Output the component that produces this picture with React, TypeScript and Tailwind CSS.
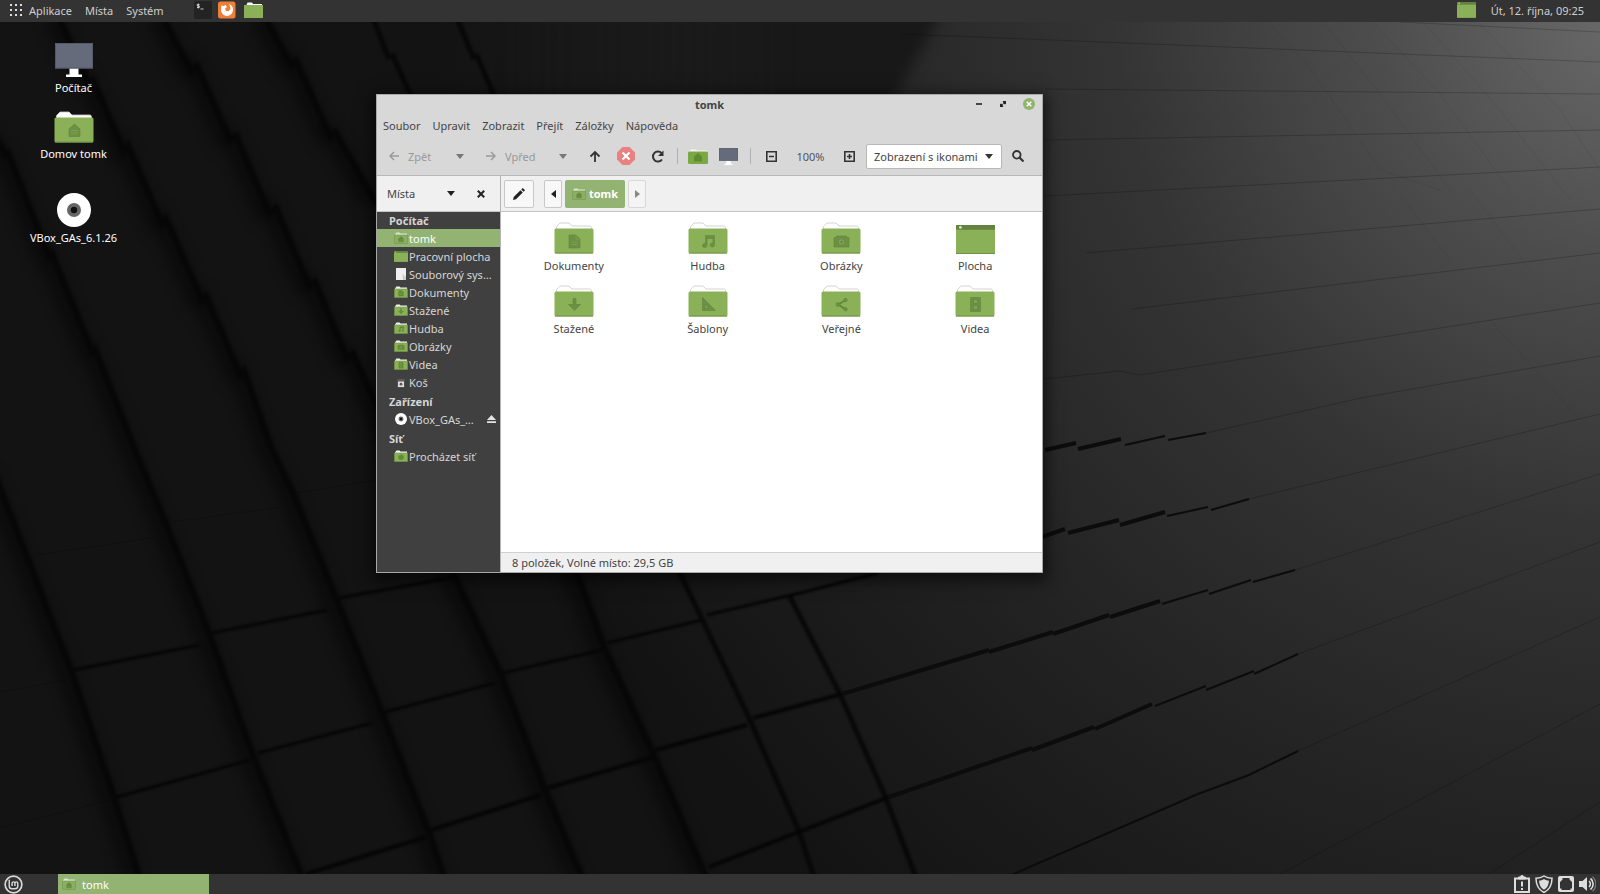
import React from "react";

type Glyph =
  | "home"
  | "document"
  | "download"
  | "music"
  | "photo"
  | "template"
  | "share"
  | "video"
  | "network";

type Place = {
  label: string;
  icon: Glyph | "desktop" | "drive" | "trash" | "disc";
  selected?: boolean;
  ejectable?: boolean;
};

const menus = ["Soubor", "Upravit", "Zobrazit", "Přejít", "Záložky", "Nápověda"];

const places: { title: string; items: Place[] }[] = [
  {
    title: "Počítač",
    items: [
      { label: "tomk", icon: "home", selected: true },
      { label: "Pracovní plocha", icon: "desktop" },
      { label: "Souborový sys…", icon: "drive" },
      { label: "Dokumenty", icon: "document" },
      { label: "Stažené", icon: "download" },
      { label: "Hudba", icon: "music" },
      { label: "Obrázky", icon: "photo" },
      { label: "Videa", icon: "video" },
      { label: "Koš", icon: "trash" },
    ],
  },
  {
    title: "Zařízení",
    items: [{ label: "VBox_GAs_…", icon: "disc", ejectable: true }],
  },
  { title: "Síť", items: [{ label: "Procházet síť", icon: "network" }] },
];

const files: { label: string; icon: Glyph | "desktop" }[] = [
  { label: "Dokumenty", icon: "document" },
  { label: "Hudba", icon: "music" },
  { label: "Obrázky", icon: "photo" },
  { label: "Plocha", icon: "desktop" },
  { label: "Stažené", icon: "download" },
  { label: "Šablony", icon: "template" },
  { label: "Veřejné", icon: "share" },
  { label: "Videa", icon: "video" },
];

// Emblems are drawn in a 16x16 box
const glyphs: Record<Glyph, React.ReactNode> = {
  home: (
    <>
      <path d="M8 1.500 2.500 6.500V14h11V6.500z" />
      <path d="M4.500 8h7M4.500 10.500h7" stroke="#7fa552" strokeWidth=".8" />
    </>
  ),
  document: (
    <>
      <path d="M2.500 1.500h7l4 4v9h-11z" />
      <path d="M9.500 2v3.500H13M5 8.500h6M5 11h6" stroke="#7fa552" strokeWidth=".8" fill="none" />
    </>
  ),
  download: <path d="M6.500 2h3v6H14l-6 6-6-6h4.500z" />,
  music: (
    <path d="M5 2h9v9.500a2.200 2 0 1 1-1.500-1.900V5h-6v7a2.200 2 0 1 1-1.500-1.900z" />
  ),
  photo: (
    <>
      <path d="M.5 4H3V2.500h10V4h2.500v9.500H.5z" />
      <circle cx="8" cy="8.500" r="3.200" fill="#7fa552" />
      <circle cx="8" cy="8.500" r="1" />
    </>
  ),
  template: <path fillRule="evenodd" d="M2 1v13h13zM4.500 8v3.500H8z" />,
  share: (
    <>
      <path d="M12 3.500 5 8l7 5" fill="none" strokeWidth="1.800" />
      <circle cx="12" cy="3.500" r="1.800" />
      <circle cx="4.500" cy="8" r="2" />
      <circle cx="12" cy="12.700" r="1.800" />
    </>
  ),
  video: (
    <>
      <path d="M3 1h10v14H3z" />
      <path d="M6 3h4v4H6zM6 9h4v4H6z" fill="#7fa552" />
    </>
  ),
  network: (
    <>
      <circle cx="8" cy="8" r="6" />
      <path d="M2 8h12M8 2v12" />
    </>
  ),
};

function FolderIcon({ glyph, className }: { glyph?: Glyph; className: string }) {
  return (
    <svg viewBox="0 0 40 32" className={className} aria-hidden="true">
      <path d="M2.500 9V4.500L6 1h9l3 3h18.500l1 1.500V9z" fill="#fff" stroke="#c9c9c9" strokeWidth=".8" />
      <rect x=".5" y="6.500" width="39" height="25" rx="1.500" fill="#8bb158" />
      <path d="M1 31h38" stroke="#6f9145" />
      {glyph && (
        <g transform="translate(12.500 11.500)" fill="#6d9144" stroke="#628539" strokeWidth=".6">
          {glyphs[glyph]}
        </g>
      )}
    </svg>
  );
}

function SmallFolder({ glyph, selected }: { glyph?: Glyph; selected?: boolean }) {
  return (
    <svg viewBox="0 0 14 12" className="h-3 w-3.5 shrink-0" aria-hidden="true">
      <path d="M1 2.500 2.500.5h3l1 1H13V4H1z" fill={selected ? "#dbe6d0" : "#f4f4f4"} />
      <path d="M.5 3h13v8.500H.5z" fill={selected ? "#8aae66" : "#8bb158"} stroke="#729a43" strokeWidth=".6" />
      {glyph && (
        <g transform="translate(3.600 3.800) scale(.43)" fill="#648a3a" stroke="#648a3a">
          {glyphs[glyph]}
        </g>
      )}
    </svg>
  );
}

function DesktopIcon({ className }: { className: string }) {
  return (
    <svg viewBox="0 0 40 30" preserveAspectRatio="none" className={className} aria-hidden="true">
      <path d="M0 0h40v30H0z" fill="#8bb158" />
      <path d="M0 0h40v5H0z" fill="#64833f" />
      <circle cx="4.500" cy="2.500" r="1.400" fill="#d8e4ca" />
      <path d="M0 29.500h40" stroke="#6f9145" />
    </svg>
  );
}

function ComputerIcon({ className }: { className: string }) {
  return (
    <svg viewBox="0 0 38 34" className={className} aria-hidden="true">
      <path d="M14.500 25h9v6.500H27V34H11v-2.500h3.500z" fill="#fff" />
      <path d="M0 0h38v25.500H0z" fill="#666b7b" />
      <path d="M.5.5h37v24.500H.5z" fill="none" stroke="#555968" />
    </svg>
  );
}

function DiscIcon({ className }: { className: string }) {
  return (
    <svg viewBox="0 0 34 34" className={className} aria-hidden="true">
      <circle cx="17" cy="17" r="17" fill="#fff" />
      <circle cx="17" cy="17" r="7" fill="#666" />
      <circle cx="17" cy="17" r="3.200" fill="#111" />
    </svg>
  );
}

function PlaceIcon({ icon, selected }: { icon: Place["icon"]; selected?: boolean }) {
  if (icon === "desktop") return <DesktopIcon className="h-[11px] w-3.5 shrink-0" />;
  if (icon === "disc") return <DiscIcon className="h-3 w-3.5 shrink-0" />;
  if (icon === "drive") {
    return (
      <svg viewBox="0 0 14 12" className="h-3 w-3.5 shrink-0" aria-hidden="true">
        <path d="M2 0h10v12H2z" fill="#eee" />
        <path d="M8.500 6 12 9v3H9z" fill="#ccc" />
      </svg>
    );
  }
  if (icon === "trash") {
    return (
      <svg viewBox="0 0 14 12" className="h-3 w-3.5 shrink-0" aria-hidden="true">
        <path d="M3.500 3h7v8.500h-7z" fill="#5c5c5c" />
        <path d="M4 5.500h6V11H4z" fill="#ddd" />
        <circle cx="7" cy="8.200" r="1.400" fill="#555" />
      </svg>
    );
  }
  return <SmallFolder glyph={icon} selected={selected} />;
}

function Caret({ className }: { className: string }) {
  return (
    <svg viewBox="0 0 8 5" className={`h-[5px] w-2 ${className}`} aria-hidden="true">
      <path d="M0 0h8L4 5z" fill="currentColor" />
    </svg>
  );
}

// Steep gaps between the blocks, from left to right
const gaps = [
  "M-4 470 74 670 117 797 143 880",
  "M-4 132 8 155 11 153 52 257 55 254 95 352 98 349 138 450 168 522 212 633 255 753 306 880",
  "M62 18 92 84 96 81 127 151 131 146 165 224 169 219 205 300 209 296 243 375 247 371 275 450 296 493 339 598 385 713 431 830 448 880",
  "M166 18 194 71 200 66 233 140 239 136 272 213 279 208 312 286 318 282 350 358 356 354 457 575 503 673 548 790 586 880",
  "M268 18 294 65 299 61 333 136 338 132 380 205M577 565 607 647 656 753 710 880",
  "M376 18 391 57 396 56 414 96M679 565 704 617 753 720 801 829 818 880",
  "M460 18 476 57 480 56 498 98M793 597 842 692 888 796 920 880",
];

const seams = [
  "M74 670 199 645M212 633 327 610M339 598 454 577",
  "M117 797 250 760M258 753 372 723M385 712 495 683M503 673 602 650M607 643 702 620M707 615 800 593 878 573",
  "M306 874 426 837M431 830 541 795M548 788 653 757M656 750 747 725M753 718 842 694",
  "M709 867 801 831M801 831 889 797",
];

const steps = [
  "M842 694 989 650M989 652 1053 632M1053 634 1109 615M1110 617 1160 601",
  "M889 797 1032 748M1032 750 1094 727M1095 729 1152 704",
  "M1045 450 1076 443M1078 449 1121 439",
  "M1042 537 1065 529M1068 533 1119 520M1120 525 1165 512",
];

const thinSteps = [
  "M1125 445 1165 436M1168 440 1206 433",
  "M1167 516 1208 507M1211 510 1249 499",
  "M1162 604 1208 590M1209 594 1251 580M1253 582 1295 570",
  "M1155 706 1206 686M1206 690 1254 671M1254 674 1298 654",
  "M1009 876 1198 794 1249 775 1298 751",
];

const hairlines = [
  "M902 34 1600 62M1400 22 1600 32M1045 89 1600 94M1045 140 1600 130M1045 196 1600 167",
  "M1086 253 1600 209M1132 309 1600 253M1045 379 1120 371 1140 375 1600 303M1206 433 1361 398 1600 356",
  "M1249 499 1600 414M1295 570 1600 474M1298 654 1600 542M1298 751 1600 617",
  "M1280 874 1600 704M1489 874 1600 802",
  "M38 555 156 537M171 522 283 507M296 493 375 480M0 692 66 680M0 828 110 800",
];

const cracks = [
  "M1270 24 1310 68 1380 170 1440 190M1325 24 1380 94 1450 190M1375 24 1440 94 1510 190",
  "M1425 24 1500 110 1570 200M1480 24 1560 110 1600 170M1400 195 1450 260M1470 190 1530 270M1490 320 1580 420",
];

function Wallpaper() {
  return (
    <svg
      viewBox="0 0 1600 894"
      preserveAspectRatio="none"
      className="absolute inset-0 h-full w-full"
      aria-hidden="true"
    >
      <defs>
        <radialGradient id="light" gradientUnits="userSpaceOnUse" cx="1640" cy="0" r="1200">
          <stop offset="0" stopColor="#6c6c6c" />
          <stop offset=".22" stopColor="#4d4d4d" />
          <stop offset=".44" stopColor="#343434" />
          <stop offset=".68" stopColor="#242424" />
          <stop offset=".86" stopColor="#1a1a1a" />
          <stop offset="1" stopColor="#131313" />
        </radialGradient>
        <linearGradient id="shade" gradientUnits="userSpaceOnUse" x1="500" y1="0" x2="800" y2="0">
          <stop offset="0" stopColor="#171717" stopOpacity="0" />
          <stop offset="1" stopColor="#181818" />
        </linearGradient>
        <filter id="soft" x="-10%" y="-10%" width="120%" height="120%" colorInterpolationFilters="sRGB">
          <feGaussianBlur stdDeviation="7" />
        </filter>
        <filter id="edge" x="-5%" y="-5%" width="110%" height="110%" colorInterpolationFilters="sRGB">
          <feGaussianBlur stdDeviation="1" />
        </filter>
      </defs>
      <path d="M0 0h1600v894H0z" fill="url(#light)" />
      <path d="M480-40H970L850 180H480z" fill="url(#shade)" filter="url(#soft)" />
      <g fill="none" stroke="#000" strokeOpacity=".5" strokeWidth="14" filter="url(#soft)">
        {gaps.slice(0, 5).map((d) => (
          <path key={d} d={d} transform="translate(-10 0)" />
        ))}
      </g>
      <g fill="none" stroke="#060606" filter="url(#edge)">
        {gaps.map((d, i) => (
          <path key={d} d={d} strokeWidth={i > 4 ? 5 : 6} strokeOpacity=".85" transform="translate(-3 0)" />
        ))}
        {seams.map((d, i) => (
          <path key={d} d={d} strokeWidth={i > 1 ? 4 : 3} />
        ))}
      </g>
      <g fill="none" stroke="#0c0c0c">
        {steps.map((d) => (
          <path key={d} d={d} strokeWidth="4" />
        ))}
        {thinSteps.map((d) => (
          <path key={d} d={d} strokeWidth="2" />
        ))}
      </g>
      <g fill="none" stroke="#000">
        {hairlines.map((d) => (
          <path key={d} d={d} strokeOpacity=".2" />
        ))}
        {cracks.map((d) => (
          <path key={d} d={d} strokeOpacity=".06" />
        ))}
      </g>
    </svg>
  );
}

function TopPanel() {
  return (
    <header className="relative flex h-[22px] items-center bg-[#333] pr-4 pb-0.5 pl-2.5 text-[#cfcfcf]">
      <svg viewBox="0 0 12 12" className="mr-[7px] h-3 w-3" fill="#ddd" aria-hidden="true">
        {[0, 5, 10].map((y) => [0, 5, 10].map((x) => <rect key={`${x}-${y}`} x={x} y={y} width="2" height="2" />))}
      </svg>
      <nav className="flex gap-[13px]">
        <button type="button">Aplikace</button>
        <button type="button">Místa</button>
        <button type="button">Systém</button>
      </nav>
      <div className="ml-[30px] flex items-center gap-1.5">
        <button type="button" aria-label="Terminál">
          <svg viewBox="0 0 18 18" className="h-[18px] w-[18px]">
            <rect width="18" height="18" rx="2" fill="#232323" />
            <path d="M5.500 3.500H3.300v1.500h2v1.500H3M4.300 2.500v5M6.500 8h3" fill="none" stroke="#ddd" strokeWidth=".9" />
          </svg>
        </button>
        <button type="button" aria-label="Firefox">
          <svg viewBox="0 0 18 18" className="h-[18px] w-[18px]">
            <rect y=".5" width="17.500" height="17" rx="2.500" fill="#ee7f37" />
            <path d="M3.500 4 5 5.200 7.500 4 9 6 7 7.500 8 10l2.500.3L12.500 8 12 5l-1-2a6 6 0 0 1 4 6 6 6 0 0 1-12 0z" fill="#fff" />
          </svg>
        </button>
        <button type="button" aria-label="Správce souborů" className="ml-0.5">
          <svg viewBox="0 0 19 16" className="h-4 w-[19px]">
            <path d="M2 4 3.500.5H8l1 1.500h9v2z" fill="#fff" />
            <path d="M0 3h19v13H0z" fill="#8bb158" />
          </svg>
        </button>
      </div>
      <div className="ml-auto flex items-center gap-[15px]">
        <DesktopIcon className="h-4 w-[19px]" />
        <time>Út, 12. října, 09:25</time>
      </div>
    </header>
  );
}

function DesktopItem({ label, children }: { label: string; children: React.ReactNode }) {
  return (
    <button type="button" className="flex w-full flex-col items-center text-white">
      {children}
      <span className="mt-[3px]">{label}</span>
    </button>
  );
}

function Separator() {
  return <span className="h-4 w-px bg-[#b0b0b0]" />;
}

function Toolbar() {
  return (
    <div className="flex h-[39px] items-center border-b border-[#b8b8b8] pl-3">
      <button type="button" className="flex items-center text-[#999]">
        <svg viewBox="0 0 10 10" className="mr-[9px] h-2.5 w-2.5" fill="none" stroke="currentColor" strokeWidth="1.500">
          <path d="M10 5H1M5 1 1 5l4 4" />
        </svg>
        <span className="w-12 text-left">Zpět</span>
        <Caret className="text-[#777]" />
      </button>
      <button type="button" className="ml-[22px] flex items-center text-[#999]">
        <svg viewBox="0 0 10 10" className="mr-[9px] h-2.5 w-2.5" fill="none" stroke="currentColor" strokeWidth="1.500">
          <path d="M0 5h9M5 1l4 4-4 4" />
        </svg>
        <span className="w-[54px] text-left">Vpřed</span>
        <Caret className="text-[#777]" />
      </button>
      <div className="ml-[22px] flex items-center gap-4">
        <button type="button" aria-label="Nahoru">
          <svg viewBox="0 0 12 12" className="h-3 w-3" fill="none" stroke="#333" strokeWidth="1.800">
            <path d="M6 12V2M1.500 6.500 6 2l4.500 4.500" />
          </svg>
        </button>
        <button type="button" aria-label="Zastavit">
          <svg viewBox="0 0 18 18" className="h-[18px] w-[18px]">
            <path d="M5.500 0h7L18 5.500v7L12.500 18h-7L0 12.500v-7z" fill="#e8817f" />
            <path d="m5.500 5.500 7 7m0-7-7 7" stroke="#fff" strokeWidth="2.200" />
          </svg>
        </button>
        <button type="button" aria-label="Obnovit">
          <svg viewBox="0 0 13 13" className="h-[13px] w-[13px]" fill="none" stroke="#333" strokeWidth="2">
            <path d="M11 9.500A5 5 0 1 1 10.500 3" />
            <path d="M12.500.5v5.500H7z" fill="#333" stroke="none" />
          </svg>
        </button>
      </div>
      <div className="ml-[13px] flex items-center">
        <Separator />
        <button type="button" aria-label="Domů" className="mr-[11px] ml-2.5">
          <svg viewBox="0 0 20 15" className="h-[15px] w-5">
            <path d="M1 3 3 .5h5l1 1h10V5H1z" fill="#f6f6f6" />
            <rect y="2.500" width="20" height="12.500" rx="1.500" fill="#7aa845" />
            <path d="m10 4-4 3.500v5h8v-5z" fill="#5f8c33" />
          </svg>
        </button>
        <button type="button" aria-label="Počítač">
          <ComputerIcon className="h-[17px] w-[19px]" />
        </button>
        <span className="w-3" />
        <Separator />
      </div>
      <button type="button" aria-label="Zmenšit" className="ml-[15px]">
        <svg viewBox="0 0 11 11" className="h-[11px] w-[11px]" fill="none" stroke="#333" strokeWidth="1.600">
          <path d="M.8.800h9.400v9.400H.8zM3 5.500h5" />
        </svg>
      </button>
      <span className="w-[67px] text-center text-[#555]">100%</span>
      <button type="button" aria-label="Zvětšit">
        <svg viewBox="0 0 11 11" className="h-[11px] w-[11px]" fill="none" stroke="#333" strokeWidth="1.600">
          <path d="M.8.800h9.400v9.400H.8zM3 5.500h5M5.500 3v5" />
        </svg>
      </button>
      <div className="relative ml-[11px] w-[136px]">
        <select
          aria-label="Způsob zobrazení"
          className="block h-[25px] w-full appearance-none rounded-xs border border-[#b8b8b8] bg-white pl-[7px] text-[#444]"
        >
          <option>Zobrazení s ikonami</option>
          <option>Zobrazení v seznamu</option>
        </select>
        <Caret className="pointer-events-none absolute top-2.5 right-[9px] text-[#333]" />
      </div>
      <button type="button" aria-label="Hledat" className="ml-2.5">
        <svg viewBox="0 0 12 12" className="h-3 w-3" fill="none" stroke="#333" strokeWidth="1.800">
          <circle cx="4.800" cy="4.800" r="3.800" />
          <path d="m7.500 7.500 4 4" strokeWidth="2.200" />
        </svg>
      </button>
    </div>
  );
}

function Sidebar() {
  return (
    <aside className="flex w-[124px] shrink-0 flex-col border-r border-[#b4b4b4]">
      <div className="flex h-9 items-center border-b border-[#c4c4c4] bg-[#f0f0f0] pr-[15px] pl-2.5">
        <button type="button" className="flex flex-1 items-center justify-between text-[#444]">
          Místa
          <Caret className="text-[#222]" />
        </button>
        <button type="button" aria-label="Zavřít postranní panel" className="ml-[22px]">
          <svg viewBox="0 0 8 8" className="h-2 w-2" stroke="#222" strokeWidth="2">
            <path d="m.8.800 6.400 6.400M7.200.800.8 7.200" />
          </svg>
        </button>
      </div>
      <div className="flex flex-1 flex-col gap-0.5 bg-[#404040] text-[#d6d6d6]">
        {places.map((group) => (
          <section key={group.title}>
            <h2 className="h-[17px] pl-3 leading-[17px] font-bold">{group.title}</h2>
            <ul>
              {group.items.map((item) => (
                <li key={item.label}>
                  <button
                    type="button"
                    className={`flex h-[18px] w-full items-center gap-px pr-1 pl-[17px] text-left whitespace-nowrap ${
                      item.selected ? "bg-[#92b372] text-white" : ""
                    }`}
                  >
                    <PlaceIcon icon={item.icon} selected={item.selected} />
                    <span>{item.label}</span>
                    {item.ejectable && (
                      <svg viewBox="0 0 9 8" className="ml-auto h-2 w-[9px] shrink-0" fill="#e4e4e4">
                        <path d="M4.500 0 9 5H0zM0 6.200h9V8H0z" />
                      </svg>
                    )}
                  </button>
                </li>
              ))}
            </ul>
          </section>
        ))}
      </div>
    </aside>
  );
}

function PathBar() {
  return (
    <div className="flex h-9 items-center border-b border-[#c4c4c4] bg-[#f0f0f0] pl-[3px]">
      <button
        type="button"
        aria-label="Upravit cestu"
        className="mr-2.5 flex h-7 w-[30px] items-center justify-center rounded-xs border border-[#c8c8c8] bg-[#f8f8f8]"
      >
        <svg viewBox="0 0 12 12" className="h-3 w-3" fill="#222">
          <path d="M0 12 .7 9 7.500 2.200l2.300 2.300L3 11.300zM8.300 1.400 9.700 0 12 2.300l-1.400 1.400z" />
        </svg>
      </button>
      <div className="flex gap-[3px]">
        <button
          type="button"
          aria-label="Předchozí"
          className="flex h-7 w-[18px] items-center justify-center rounded-xs border border-[#c8c8c8] bg-[#f8f8f8]"
        >
          <svg viewBox="0 0 5 8" className="h-2 w-[5px]" fill="#222">
            <path d="M5 0v8L0 4z" />
          </svg>
        </button>
        <button
          type="button"
          className="flex h-7 w-[60px] items-center justify-center gap-[3px] rounded-xs bg-[#92b372] font-bold text-white"
        >
          <SmallFolder glyph="home" selected />
          tomk
        </button>
        <button
          type="button"
          aria-label="Následující"
          className="flex h-7 w-[18px] items-center justify-center rounded-xs border border-[#d8d8d8] bg-[#f4f4f4]"
        >
          <svg viewBox="0 0 5 8" className="h-2 w-[5px]" fill="#888">
            <path d="M0 0v8l5-4z" />
          </svg>
        </button>
      </div>
    </div>
  );
}

function FileManager() {
  return (
    <section className="absolute top-[72px] left-[376px] flex h-[479px] w-[667px] flex-col border border-[#a8a8a8] bg-[#d8d8d8] text-[#444] shadow-[0_4px_14px_4px_rgba(0,0,0,0.55)]">
      <div className="grid h-5 grid-cols-[1fr_auto_1fr] items-center pb-0.5">
        <h1 className="col-start-2 font-bold">tomk</h1>
        <div className="flex items-center justify-end gap-[17px] pr-[7px]">
          <button type="button" aria-label="Minimalizovat">
            <svg viewBox="0 0 8 8" className="h-2 w-2">
              <path d="M1 4h6" stroke="#222" strokeWidth="1.600" />
            </svg>
          </button>
          <button type="button" aria-label="Maximalizovat">
            <svg viewBox="0 0 6 6" className="h-1.5 w-1.5" fill="#222">
              <path d="M2.500 0H6v3.500L5 2.700 4.200 3.500 2.700 2l.8-.8zM3.500 6H0V2.500l1 .8.8-.8L3.300 4l-.8.8z" />
            </svg>
          </button>
          <button type="button" aria-label="Zavřít">
            <svg viewBox="0 0 12 12" className="h-3 w-3">
              <circle cx="6" cy="6" r="6" fill="#8fb56a" />
              <path d="m3.700 3.700 4.600 4.600m0-4.600L3.700 8.300" stroke="#fff" strokeWidth="1.500" />
            </svg>
          </button>
        </div>
      </div>
      <nav className="flex h-[22px] items-center gap-3 pb-0.5 pl-1.5">
        {menus.map((menu) => (
          <button type="button" key={menu}>
            {menu}
          </button>
        ))}
      </nav>
      <Toolbar />
      <div className="flex min-h-0 flex-1">
        <Sidebar />
        <div className="flex min-w-0 flex-1 flex-col">
          <PathBar />
          <ul className="grid flex-1 auto-rows-[63px] grid-cols-4 bg-white pt-2.5 pl-1.5">
            {files.map((file) => (
              <li key={file.label}>
                <button type="button" className="flex w-full flex-col items-center">
                  <span className="flex h-8 items-end">
                    {file.icon === "desktop" ? (
                      <DesktopIcon className="h-[29px] w-[39px]" />
                    ) : (
                      <FolderIcon glyph={file.icon} className="h-8 w-10" />
                    )}
                  </span>
                  <span className="mt-1">{file.label}</span>
                </button>
              </li>
            ))}
          </ul>
          <footer className="flex h-5 items-center border-t border-[#d0d0d0] bg-[#f0f0f0] pl-[11px]">
            8 položek, Volné místo: 29,5 GB
          </footer>
        </div>
      </div>
    </section>
  );
}

function BottomPanel() {
  return (
    <footer className="relative flex h-5 items-center bg-[#333] pr-1 pl-1 text-[#ddd]">
      <button type="button" aria-label="Nabídka Mint">
        <svg viewBox="0 0 20 20" className="h-[19px] w-[19px]" fill="none" stroke="#d8d8d8" strokeWidth="1.800">
          <circle cx="10" cy="10" r="8.800" />
          <path d="M5.500 5v6.500a3 3 0 0 0 3 3h3a3 3 0 0 0 3-3V8.700a1.500 1.500 0 0 0-3 0V11.500M11.500 8.700a1.500 1.500 0 0 0-3 0v2.800" strokeWidth="1.500" />
        </svg>
      </button>
      <button type="button" className="ml-[35px] flex h-full w-[151px] items-center gap-1.5 bg-[#92b372] pl-1 text-left text-white">
        <SmallFolder glyph="home" selected />
        tomk
      </button>
      <div className="ml-auto flex items-center gap-[5px]">
        <svg viewBox="0 0 16 18" className="h-[18px] w-4" fill="none" stroke="#ddd" strokeWidth="2" aria-hidden="true">
          <path d="M1 3.500h14V17H1zM8 6.500v5M8 13v2" />
          <path d="M4.500 4V2h2a1.500 1.500 0 0 1 3 0h2v2z" fill="#ddd" strokeWidth="1" />
        </svg>
        <svg viewBox="0 0 18 18" className="h-[18px] w-[18px]" aria-hidden="true">
          <path d="M9 1C6.500 2.800 4 3.300 1 3.300 1 10 3.500 14.800 9 17.500c5.500-2.700 8-7.500 8-14.200-3 0-5.500-.5-8-2.300z" fill="none" stroke="#ddd" strokeWidth="1.500" />
          <path d="M9 4C7.300 5.200 5.700 5.600 4 5.700c.3 4.200 1.800 7.200 5 9.100 3.200-1.900 4.700-4.900 5-9.100-1.700-.1-3.300-.5-5-1.700z" fill="#ddd" />
        </svg>
        <svg viewBox="0 0 16 16" className="h-4 w-4" aria-hidden="true">
          <rect x="1" y="1" width="14" height="14" rx="1" fill="none" stroke="#ddd" strokeWidth="2" />
          <path d="M2 2h2.500v1.500L2 6zM14 2h-2.500v1.500L14 6zM2 12.500h1.500V14H2zM12.500 12.500H14V14h-1.500z" fill="#ddd" />
        </svg>
        <svg viewBox="0 0 17 16" className="h-4 w-[17px]" aria-hidden="true">
          <path d="M0 5h3.500L8 1v14l-4.500-4H0z" fill="#ddd" />
          <path d="M10 5a4 4 0 0 1 0 6M11.500 2.500a7 7 0 0 1 0 11" fill="none" stroke="#ddd" strokeWidth="1.600" />
          <path d="M13.500.8a9.500 9.500 0 0 1 0 14.400" fill="none" stroke="#777" strokeWidth="1.300" />
        </svg>
      </div>
    </footer>
  );
}

export default function App() {
  return (
    <div className="relative flex min-h-screen flex-col overflow-hidden bg-[#131313] font-['Noto_Sans',sans-serif] text-[11px] leading-[15px]">
      <Wallpaper />
      <TopPanel />
      <main className="relative flex-1">
        <div className="flex w-[147px] flex-col pt-[21px]">
          <DesktopItem label="Počítač">
            <ComputerIcon className="h-[34px] w-[38px]" />
          </DesktopItem>
          <div className="pt-4 pb-8">
            <DesktopItem label="Domov tomk">
              <FolderIcon glyph="home" className="h-8 w-10" />
            </DesktopItem>
          </div>
          <DesktopItem label="VBox_GAs_6.1.26">
            <DiscIcon className="h-[34px] w-[34px]" />
          </DesktopItem>
        </div>
        <FileManager />
      </main>
      <BottomPanel />
    </div>
  );
}
